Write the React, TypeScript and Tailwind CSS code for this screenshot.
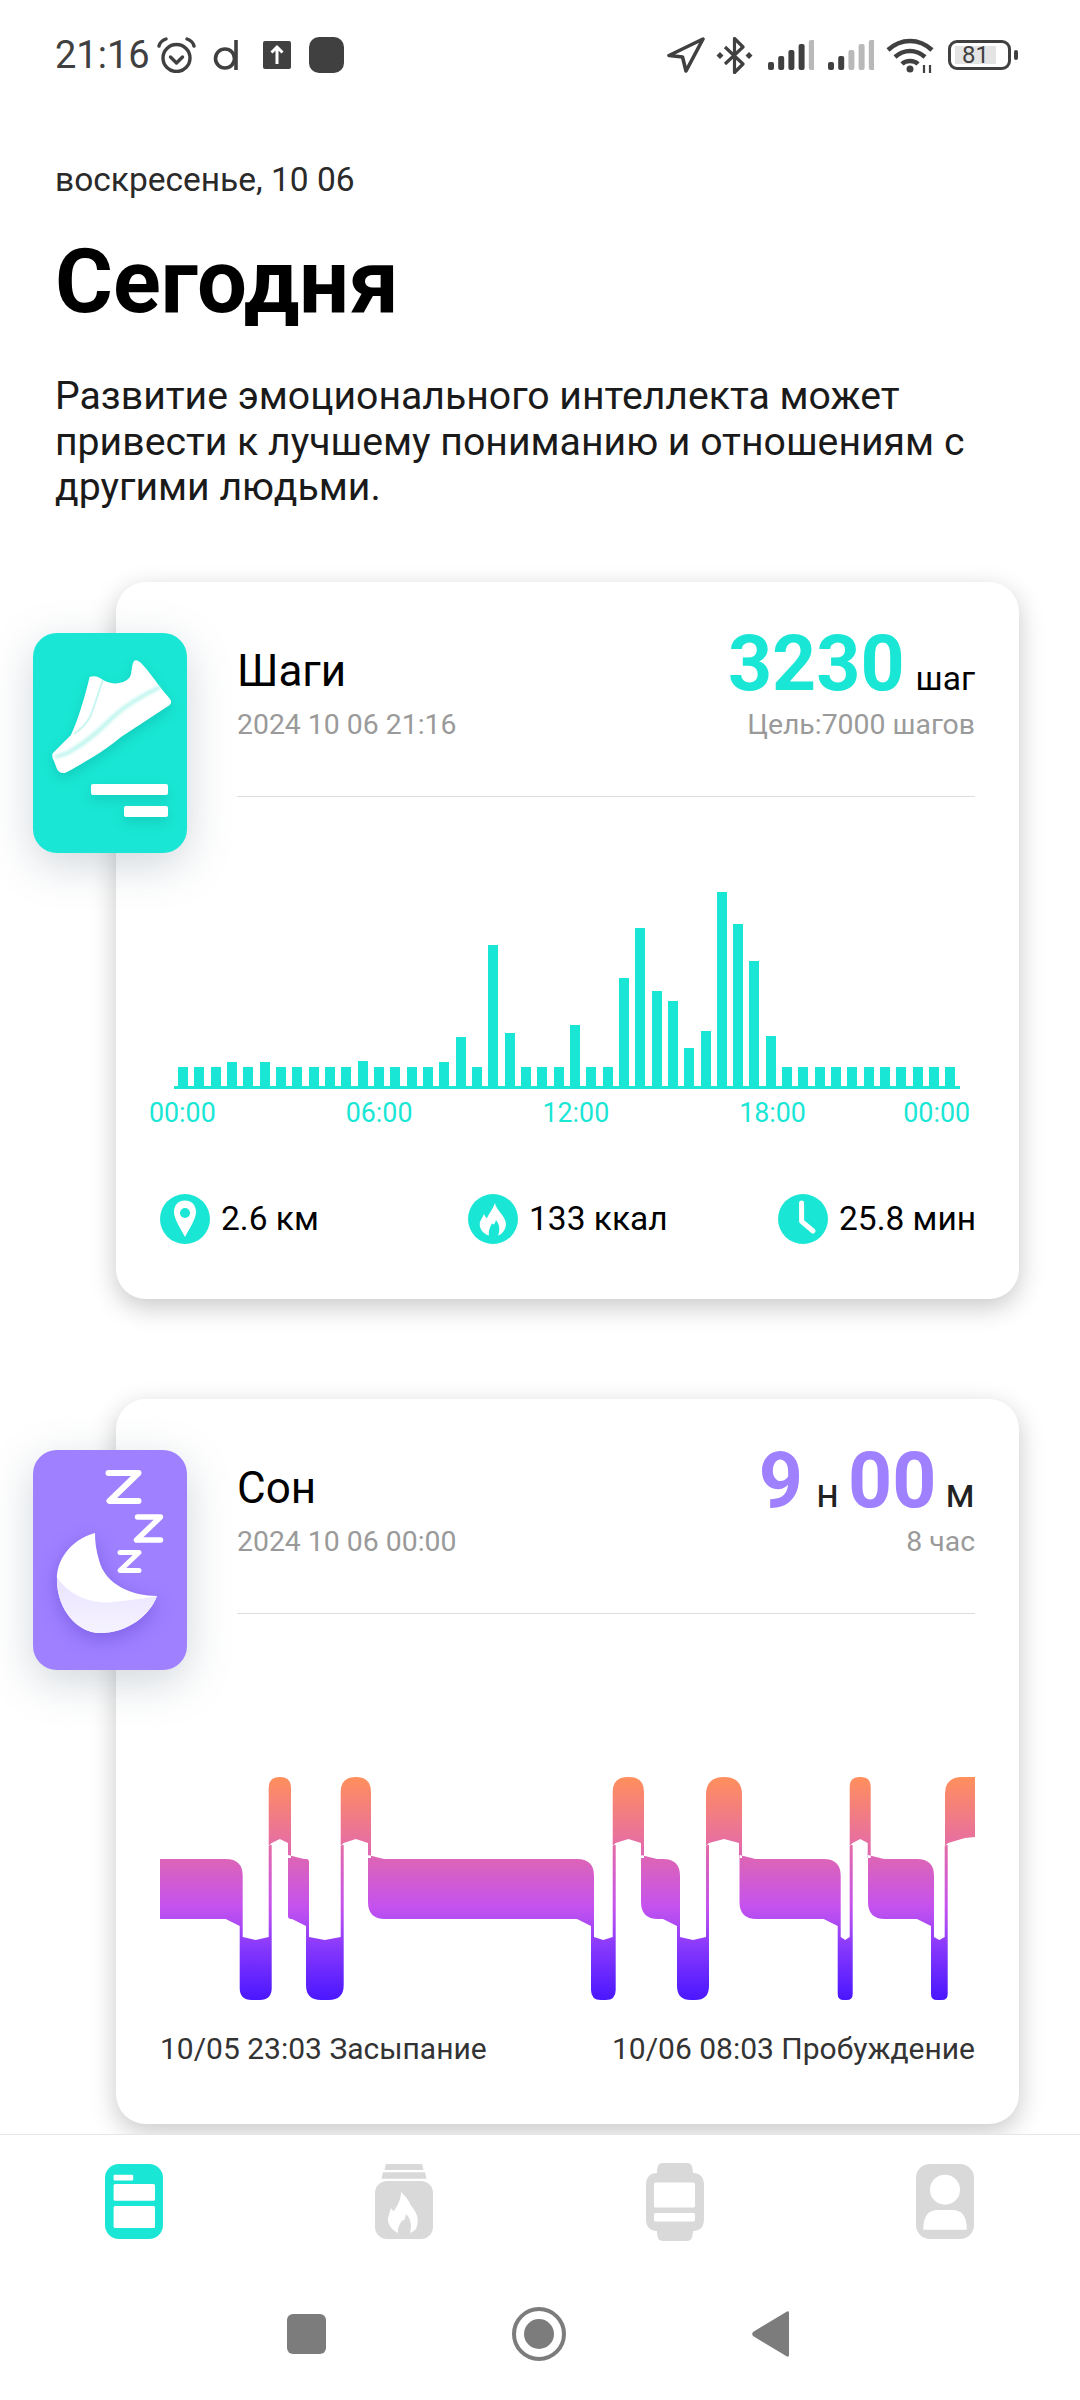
import React from "react";

const font = { fontFamily: "Roboto, sans-serif" };

const stepHeights = [
  19, 19, 19, 24, 19, 24, 19, 19, 19, 19, 19, 25, 19, 19, 19, 19, 24, 49, 19, 141, 53, 19, 19, 19,
  61, 19, 19, 108, 158, 95, 85, 38, 55, 194, 162, 125, 50, 19, 19, 19, 19, 19, 19, 19, 19, 19, 19, 19,
];

// sleep chart, each cycle is mid -> low -> top, x values in page px
const cycles = [
  { midL: 160, midR: 242.7, lowR: 271.7, topR: 291, rMid: 17, rLow: 12, rTop: 11 },
  { midL: 288, midR: 309, lowR: 343.7, topR: 371, rMid: 3, rLow: 15, rTop: 15 },
  { midL: 368, midR: 594, lowR: 615.7, topR: 644, rMid: 17, rLow: 10, rTop: 15 },
  { midL: 641, midR: 680, lowR: 709, topR: 742, rMid: 17, rLow: 14, rTop: 18 },
  { midL: 739.5, midR: 840.7, lowR: 852.7, topR: 870.7, rMid: 17, rLow: 6, rTop: 10 },
  { midL: 868, midR: 934, lowR: 947.7, topR: 0, rMid: 17, rLow: 6, rTop: 0 },
];

function sleepPath() {
  let d = "";
  cycles.forEach((c, i) => {
    const a = c.midL;
    const b = c.midR;
    const m = c.rMid;
    d +=
      i === 0
        ? `M${a} 1859 `
        : `M${a} 1855 L${a + 16} 1859 `;
    d += `L${b - m} 1859 Q${b} 1859 ${b} ${1859 + m} L${b} 1926 L${b - 3} 1926 L${b - 17} 1919 `;
    d += i === 0 ? `L${a} 1919 Z ` : `L${a + m} 1919 Q${a} 1919 ${a} ${1919 - m} Z `;

    const l = b - 3;
    const R = c.lowR;
    const r = c.rLow;
    d += `M${l} 1922 L${l + 3} 1922 L${l + 3} 1937 L${(l + R) / 2} 1940 L${R - 3} 1937 L${R - 3} 1845 L${R} 1845 `;
    d += `L${R} ${2000 - r} Q${R} 2000 ${R - r} 2000 L${l + r} 2000 Q${l} 2000 ${l} ${2000 - r} Z `;

    if (c.topR) {
      const tl = R - 3;
      const tr = c.topR;
      const t = c.rTop;
      d += `M${tl} 1846 L${tl + 3} 1843 L${(tl + tr) / 2} 1839 L${tr - 3} 1843 L${tr - 3} 1858 L${tr} 1858 `;
      d += `L${tr} ${1777 + t} Q${tr} 1777 ${tr - t} 1777 L${tl + t} 1777 Q${tl} 1777 ${tl} ${1777 + t} Z `;
    }
  });
  d += "M945 1846 L948 1843 L965 1838 L975 1837 L975 1777 L962 1777 Q945 1777 945 1794 Z";
  return d;
}

function SleepChart() {
  return (
    <svg width="815" height="223" viewBox="160 1777 815 223" className="block">
      <defs>
        <linearGradient id="sleepGrad" gradientUnits="userSpaceOnUse" x1="0" y1="1777" x2="0" y2="2000">
          <stop offset="0" stopColor="#ff8f5c" />
          <stop offset="0.28" stopColor="#e8709e" />
          <stop offset="0.37" stopColor="#dc64b8" />
          <stop offset="0.58" stopColor="#c552ee" />
          <stop offset="0.64" stopColor="#b34cf2" />
          <stop offset="0.75" stopColor="#8a3afb" />
          <stop offset="1" stopColor="#4a17ff" />
        </linearGradient>
      </defs>
      <path d={sleepPath()} fill="url(#sleepGrad)" />
    </svg>
  );
}

function Signal({ dark }: { dark: number }) {
  const hs = [8, 14, 20, 26, 30];
  return (
    <svg width="47" height="30" viewBox="0 0 47 30">
      {hs.map((h, i) => (
        <rect key={i} x={i * 10.2 + 1} y={30 - h} width="6" height={h} rx="2" fill={i < dark ? "#404040" : "#b9b9b9"} />
      ))}
    </svg>
  );
}

function StatusBar() {
  return (
    <div className="flex h-[110px] shrink-0 items-center pl-[55px] pr-[62px] text-[#404040]">
      <span className="w-[93px] text-[38px] leading-none">21:16</span>
      <svg className="ml-[9px]" width="39" height="36" viewBox="0 0 39 36" fill="none" stroke="#404040" strokeWidth="3.4">
        <circle cx="19.5" cy="21" r="13.5" />
        <path d="M13.5 20l6 6 6-6" strokeLinecap="round" strokeLinejoin="round" />
        <path d="M2 9c1-4 4-6 7-7M37 9c-1-4-4-6-7-7" strokeLinecap="round" />
      </svg>
      <svg className="ml-[17px]" width="26" height="30" viewBox="0 0 26 30" fill="none" stroke="#404040">
        <circle cx="12" cy="18.5" r="9.5" strokeWidth="3.6" />
        <path d="M23 0V30" strokeWidth="3.6" />
      </svg>
      <svg className="ml-[24px]" width="28" height="28" viewBox="0 0 28 28">
        <rect width="28" height="28" rx="2" fill="#404040" />
        <path d="M14 23V6M8.5 11.5L14 6l5.5 5.5" fill="none" stroke="#fff" strokeWidth="3" />
      </svg>
      <div className="ml-[18px] h-[36px] w-[35px] rounded-[10px] bg-[#404040]" />

      <svg className="ml-auto" width="38" height="36" viewBox="0 0 38 36" fill="none" stroke="#404040" strokeWidth="3.6" strokeLinejoin="round">
        <path d="M36 2L2 18.5l13.5 1.5L19 34z" />
      </svg>
      <svg className="ml-[11px]" width="37" height="37" viewBox="0 0 37 37" fill="none" stroke="#404040" strokeWidth="3.2">
        <path d="M9 10l18 17-8.5 8.5V1.5L27 10 9 27" strokeLinejoin="round" />
        <path d="M0.5 18.5L4 15l3.5 3.5L4 22zM29.5 18.5L33 15l3.5 3.5L33 22z" fill="#404040" stroke="none" />
      </svg>
      <div className="ml-[14px]">
        <Signal dark={4} />
      </div>
      <div className="ml-[13px]">
        <Signal dark={2} />
      </div>
      <svg className="ml-[12px]" width="48" height="35" viewBox="0 0 48 35" fill="none" stroke="#404040" strokeWidth="4.5">
        <path d="M2 12c13-12 31-12 44 0M9 19c9-8 21-8 30 0M16 26c4-4 12-4 16 0" />
        <circle cx="24" cy="31" r="3.5" fill="#404040" stroke="none" />
        <path d="M38 27v8M44 27v8" strokeWidth="2.2" />
      </svg>
      <div className="ml-[14px] flex h-[30px] w-[63px] items-center rounded-[9px] border-[3px] border-[#404040] pl-[4px]">
        <div className="flex h-[18px] w-[41px] items-center justify-center bg-[#e4e4e4] text-[24px] leading-none">81</div>
      </div>
      <div className="ml-[3px] h-[10px] w-[4px] rounded-[2px] bg-[#404040]" />
    </div>
  );
}

function ShoeTile() {
  return (
    <div className="absolute left-[-83px] top-[51px] h-[220px] w-[154px] rounded-[24px] bg-[#19e6d4] shadow-[0_12px_44px_rgba(90,110,130,0.28)]">
      <svg width="154" height="220" viewBox="0 0 154 220" className="drop-shadow-[0_5px_6px_rgba(0,120,110,0.22)]">
        <path
          d="M56.6 44 C62 42 66 44 70 47 C75 50 82 51 86 50 C92 49 97 46 98 41 C99 35 99 31 101 28 C103 26 106 28 108 30 C115 37 121 46 127 54 L137 66 C139 69 138 71 136 72.5 L88 104 C78 112 70 118 60 124 C50 130 42 135 33 139.5 C29 141 25 139 24 136 L20.5 127 C19 124 19 121 20 120 L38 102 C42 94 50 72 56.6 44 Z"
          fill="#ffffff"
        />
        <path d="M22 124 C30 122 36 120 41 116 C55 108 68 96 80 84 C92 73 108 63 127 54" fill="none" stroke="#a8f2e9" strokeWidth="4" opacity="0.75" className="blur-[1.5px]" />
        <path d="M70 47 C65 60 62 72 57 84 C52 93 47 97 41 101" fill="none" stroke="#c8f7f1" strokeWidth="2" />
        <rect x="58" y="151" width="77" height="11" rx="2" fill="#fff" />
        <rect x="91" y="173" width="44" height="11" rx="2" fill="#fff" />
      </svg>
    </div>
  );
}

function MoonTile() {
  return (
    <div className="absolute left-[-83px] top-[51px] h-[220px] w-[154px] rounded-[24px] bg-[#9f80ff] shadow-[0_12px_44px_rgba(90,110,130,0.28)]">
      <svg width="154" height="220" viewBox="0 0 154 220" fill="none">
        <defs>
          <linearGradient id="moonLower" x1="0" y1="0" x2="0" y2="1">
            <stop offset="0" stopColor="#e9e3ff" />
            <stop offset="1" stopColor="#f6f3ff" />
          </linearGradient>
        </defs>
        <g stroke="#fff" strokeWidth="6" strokeLinecap="round" strokeLinejoin="round">
          <path d="M75.5 23h30L76.5 51h29" />
          <path d="M104.5 67h23l-24 23h24" strokeWidth="5.5" />
          <path d="M87 102.5h19L87 120.5h19" strokeWidth="5" />
        </g>
        <g className="drop-shadow-[0_6px_10px_rgba(80,50,200,0.4)]">
          <path
            d="M62 83 C36 90 23 112 24 130 C24 160 45 183 67 183 C95 183 117 165 124 146 C100 146 72 135 66 110 C63 100 62 92 62 83 Z"
            fill="#ffffff"
          />
          <path d="M24 127 C35 145 60 155 80 152 C100 150 115 148 124 146 C117 165 95 183 67 183 C45 183 24 160 24 130 Z" fill="url(#moonLower)" />
        </g>
      </svg>
    </div>
  );
}

function PinIcon() {
  return (
    <svg width="50" height="50" viewBox="0 0 50 50" className="shrink-0">
      <circle cx="25" cy="25" r="25" fill="#19e6d4" />
      <path d="M25 6.5C17.5 6.5 14 12 14 18C14 25 21 35 25 43C29 35 36 25 36 18C36 12 32.5 6.5 25 6.5Z" fill="#fff" />
      <circle cx="25" cy="19" r="5" fill="#19e6d4" />
    </svg>
  );
}

function FlameIcon() {
  return (
    <svg width="50" height="50" viewBox="0 0 50 50" className="shrink-0">
      <circle cx="25" cy="25" r="25" fill="#19e6d4" />
      <path d="M27 9C28 15 34 19 37 26C40 33 35 40 30 41.5C32 37 32 31 28 26C27 30 25 32 24 29C23 32 20 36 21 41.5C15 40 10.5 34 12 28C13 25 15 23 16 20C17 22 18 24 19 24C21 19 25 15 27 9Z" fill="#fff" />
    </svg>
  );
}

function ClockIcon() {
  return (
    <svg width="50" height="50" viewBox="0 0 50 50" className="shrink-0">
      <circle cx="25" cy="25" r="25" fill="#19e6d4" />
      <path d="M23.6 9V27.3L35 37" fill="none" stroke="#fff" strokeWidth="5" strokeLinecap="round" strokeLinejoin="round" />
    </svg>
  );
}

function StepsCard() {
  return (
    <div className="relative ml-[116px] w-[903px] rounded-[30px] bg-white shadow-[0_8px_26px_rgba(0,0,0,0.22)]">
      <ShoeTile />
      <div className="pl-[121px] pr-[44px] pt-[65px]">
        <div className="flex h-[48px] justify-between">
          <span className="text-[44px] leading-[48px] text-black">Шаги</span>
          <div className="-mt-[7px] flex items-baseline">
            <span className="text-[77px] font-bold leading-[48px] text-[#19e6d4]">3230</span>
            <span className="ml-[11px] text-[33.5px] leading-[48px] text-black">шаг</span>
          </div>
        </div>
        <div className="mt-[12px] flex justify-between text-[28.4px] leading-[36px] text-[#9a9a9a]">
          <span>2024 10 06 21:16</span>
          <span>Цель:7000 шагов</span>
        </div>
        <div className="mt-[53px] h-px bg-[#dedede]" />
      </div>

      <div className="ml-[58px] mt-[96px] w-[786px]">
        <div className="flex h-[193px] items-end justify-between px-[4px]">
          {stepHeights.map((h, i) => (
            <div key={i} className="w-[10px] bg-[#19e6d4]" style={{ height: h }} />
          ))}
        </div>
        <div className="h-[3px] bg-[#19e6d4]" />
      </div>

      <div className="ml-[33px] mt-[8px] flex w-[821px] justify-between text-[26.8px] leading-[32px] text-[#19e6d4]">
        <div className="flex gap-[130px]">
          <span>00:00</span>
          <span>06:00</span>
          <span>12:00</span>
          <span>18:00</span>
        </div>
        <span>00:00</span>
      </div>

      <div className="ml-[44px] mr-[44px] mt-[65px] grid grid-cols-[308px_310px_1fr] whitespace-nowrap pb-[55px] text-[33.5px] leading-[50px] text-black">
        <div className="flex items-center gap-[11px]">
          <PinIcon />
          <span>2.6 км</span>
        </div>
        <div className="flex items-center gap-[11px]">
          <FlameIcon />
          <span>133 ккал</span>
        </div>
        <div className="flex items-center gap-[11px]">
          <ClockIcon />
          <span>25.8 мин</span>
        </div>
      </div>
    </div>
  );
}

function SleepCard() {
  return (
    <div className="relative ml-[116px] mt-[100px] w-[903px] rounded-[30px] bg-white shadow-[0_8px_26px_rgba(0,0,0,0.22)]">
      <MoonTile />
      <div className="pl-[121px] pr-[44px] pt-[65px]">
        <div className="flex h-[48px] justify-between">
          <span className="text-[44px] leading-[48px] text-black">Сон</span>
          <div className="-mt-[7px] flex items-baseline text-[#9f80ff]">
            <span className="text-[77px] font-bold leading-[48px]">9</span>
            <span className="ml-[13px] text-[40px] leading-[48px] text-[#222]">н</span>
            <span className="ml-[9px] text-[77px] font-bold leading-[48px]">00</span>
            <span className="ml-[9px] text-[40px] leading-[48px] text-[#222]">м</span>
          </div>
        </div>
        <div className="mt-[12px] flex justify-between text-[28.4px] leading-[36px] text-[#9a9a9a]">
          <span>2024 10 06 00:00</span>
          <span>8 час</span>
        </div>
        <div className="mt-[53px] h-px bg-[#dedede]" />
      </div>

      <div className="ml-[44px] mt-[163px]">
        <SleepChart />
      </div>

      <div className="mx-[44px] mt-[31px] flex justify-between pb-[57px] text-[30px] leading-[36px] text-[#333]">
        <span>10/05 23:03 Засыпание</span>
        <span>10/06 08:03 Пробуждение</span>
      </div>
    </div>
  );
}

function BottomNav() {
  return (
    <div className="relative z-10 h-[266px] shrink-0 border-t border-[#e6e6e6] bg-white">
      <div className="flex items-start justify-between pl-[105px] pr-[106px] pt-[29px]">
        <svg width="58" height="75" viewBox="0 0 58 75">
          <rect width="58" height="75" rx="14" fill="#19e6d4" />
          <rect x="8.6" y="10.7" width="19.6" height="5.8" rx="1" fill="#fff" />
          <rect x="8.6" y="20" width="41.4" height="16.7" rx="1.5" fill="#fff" />
          <rect x="8.6" y="42" width="41.4" height="22" rx="1.5" fill="#fff" />
        </svg>
        <svg width="58" height="75" viewBox="0 0 58 75">
          <path d="M11 0H47L48.5 6H9.5Z" fill="#d9d9d9" />
          <path d="M8 8.3H50L51.5 14.7H6.5Z" fill="#d9d9d9" />
          <rect y="17" width="58" height="58" rx="12" fill="#d9d9d9" />
          <path d="M26 28C30 32 36 38 37 46C36 43 36 41 35 40C39 46 46 52 41 65C39 67 37 68 35 69C37 62 36 55 31 50C30 55 29 58 27 56C26 59 22 63 23 69C17 66 12 60 13 54C14 50 15 47 16 44C17 46 18 47 19 47C22 42 26 36 26 28Z" fill="#fff" />
        </svg>
        <svg width="58" height="78" viewBox="0 0 58 78" className="-mt-px">
          <path d="M11 10C11 4 12 0 17 0H41C46 0 46.5 4 47 10C54 10 58 14 58 22V56C58 64 54 68 47 68C46.5 74 46 78 41 78H17C12 78 11 74 11 68C4 68 0 64 0 56V22C0 14 4 10 11 10Z" fill="#d9d9d9" />
          <rect x="8" y="19.5" width="41" height="25" rx="1.5" fill="#fff" />
          <rect x="8" y="50" width="41" height="8.5" rx="1.5" fill="#fff" />
        </svg>
        <svg width="58" height="75" viewBox="0 0 58 75">
          <rect width="58" height="75" rx="14" fill="#d9d9d9" />
          <ellipse cx="29" cy="25.7" rx="15" ry="15" fill="#fff" />
          <path d="M7.3 65.7C7.3 52 12 46 22 46H36C46 46 50.8 52 50.8 65.7Z" fill="#fff" />
        </svg>
      </div>
      <div className="mt-[66px] flex items-center gap-[186px] pl-[287px]">
        <div className="h-[40px] w-[39px] rounded-[6px] bg-[#7c7c7c]" />
        <div className="flex h-[54px] w-[54px] items-center justify-center rounded-full border-[4px] border-[#7c7c7c]">
          <div className="h-[30px] w-[30px] rounded-full bg-[#7c7c7c]" />
        </div>
        <svg width="37" height="46" viewBox="0 0 37 46">
          <path d="M35 0.5C36.5 0 37 1 37 2V44C37 45 36.5 46 35 45.5L1 25C0 24 0 22 1 21Z" fill="#7c7c7c" />
        </svg>
      </div>
    </div>
  );
}

export default function App() {
  return (
    <div className="flex h-[2400px] w-[1080px] flex-col overflow-hidden bg-white" style={font}>
      <StatusBar />
      <div className="min-h-0 flex-1">
        <div className="px-[55px]">
          <p className="mt-[50px] text-[33.5px] leading-[40px] text-[#2a2a2a]">воскресенье, 10 06</p>
          <h1 className="mt-[36px] text-[88.5px] font-bold leading-[92px] text-black">Сегодня</h1>
          <p className="mt-[46px] whitespace-nowrap text-[39.2px] leading-[45.6px] text-[#1a1a1a]">
            Развитие эмоционального интеллекта может
            <br />
            привести к лучшему пониманию и отношениям с
            <br />
            другими людьми.
          </p>
        </div>
        <div className="mt-[71px]">
          <StepsCard />
          <SleepCard />
        </div>
      </div>
      <BottomNav />
    </div>
  );
}
